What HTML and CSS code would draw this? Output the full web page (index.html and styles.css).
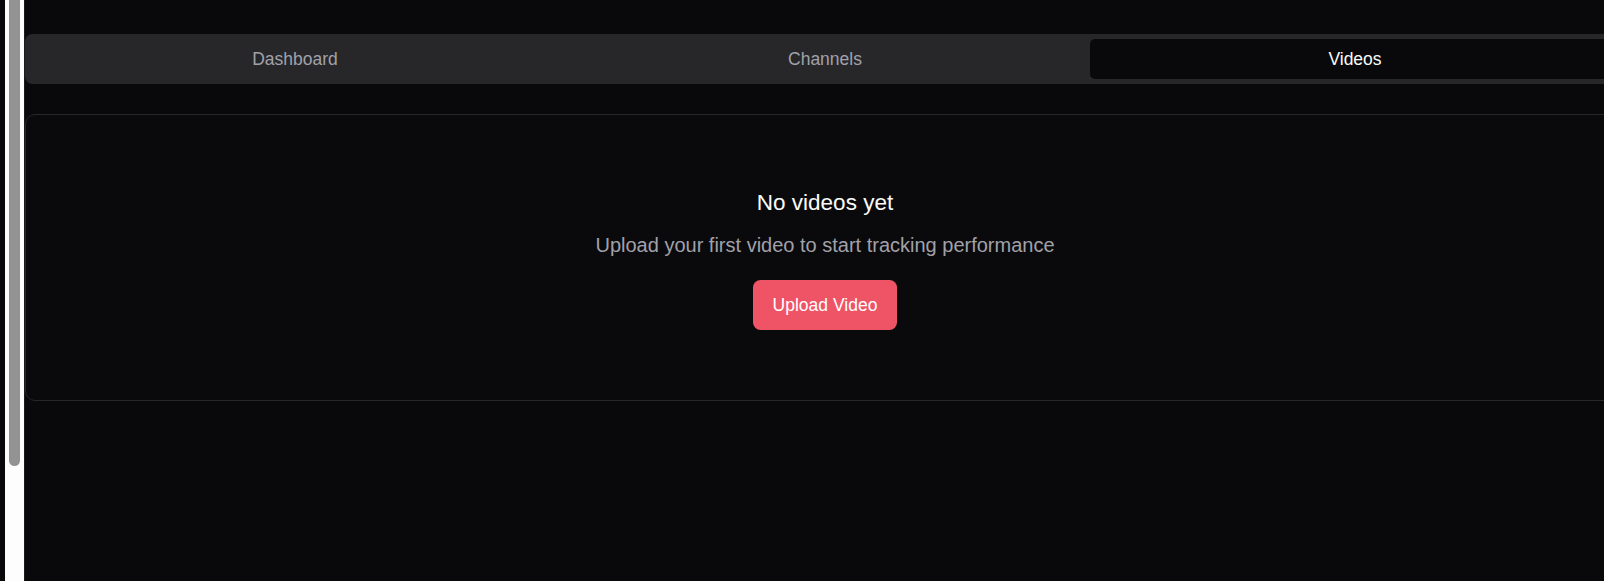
FILE: index.html
```html
<!DOCTYPE html>
<html lang="en">
<head>
<meta charset="utf-8">
<title>Videos</title>
<link rel="stylesheet" href="styles.css">
</head>
<body>
<div class="app">
  <div class="side">
    <div class="track"><div class="thumb"></div></div>
  </div>
  <main class="main">
    <div class="tabs">
      <button class="tab">Dashboard</button>
      <button class="tab">Channels</button>
      <button class="tab active">Videos</button>
    </div>
    <section class="card empty">
      <h3 class="empty-title">No videos yet</h3>
      <p class="empty-text">Upload your first video to start tracking performance</p>
      <button class="btn-primary">Upload Video</button>
    </section>
  </main>
</div>
</body>
</html>
```

FILE: styles.css
```css
html, body {
  margin: 0;
  padding: 0;
  background: #09090b;
  overflow: hidden;
  font-family: "Liberation Sans", Arial, sans-serif;
}

.app {
  display: flex;
  height: 581px;
}

.side {
  flex: none;
  width: 24px;
  box-sizing: border-box;
  padding-left: 5px;
  background: #09090b;
  display: flex;
}

.track {
  width: 19px;
  box-sizing: border-box;
  padding: 0 4px;
  background: #fdfdfd;
}

.thumb {
  width: 11px;
  height: 466px;
  background: #939393;
  border-radius: 0 0 6px 6px;
}

.main {
  flex: none;
  width: 1600px;
  border-left: 1px solid #1c1c1f;
  padding-top: 34px;
}

.tabs {
  height: 50px;
  box-sizing: border-box;
  padding: 5px;
  background: #27272a;
  border-radius: 7.5px;
  display: grid;
  grid-template-columns: 1fr 1fr 1fr;
}

.tab {
  border: 0;
  background: transparent;
  color: #a1a1aa;
  font-family: inherit;
  font-size: 17.5px;
  border-radius: 5px;
  padding: 0;
  cursor: pointer;
}

.tab.active {
  background: #09090b;
  color: #fafafa;
}

.card {
  margin-top: 30px;
  border: 1px solid #27272a;
  border-radius: 10px;
  background: #0a0a0c;
}

.empty {
  padding: 70px 0;
  display: flex;
  flex-direction: column;
  align-items: center;
  text-align: center;
}

.empty-title {
  margin: 0;
  font-size: 22.5px;
  line-height: 35px;
  font-weight: 400;
  color: #fafafa;
}

.empty-text {
  margin: 10px 0 20px;
  font-size: 20px;
  line-height: 30px;
  color: #a1a1aa;
}

.btn-primary {
  height: 50px;
  padding: 0 20px;
  border: 0;
  border-radius: 7.5px;
  background: #ef5366;
  color: #ffffff;
  font-family: inherit;
  font-size: 17.5px;
  cursor: pointer;
}
```
